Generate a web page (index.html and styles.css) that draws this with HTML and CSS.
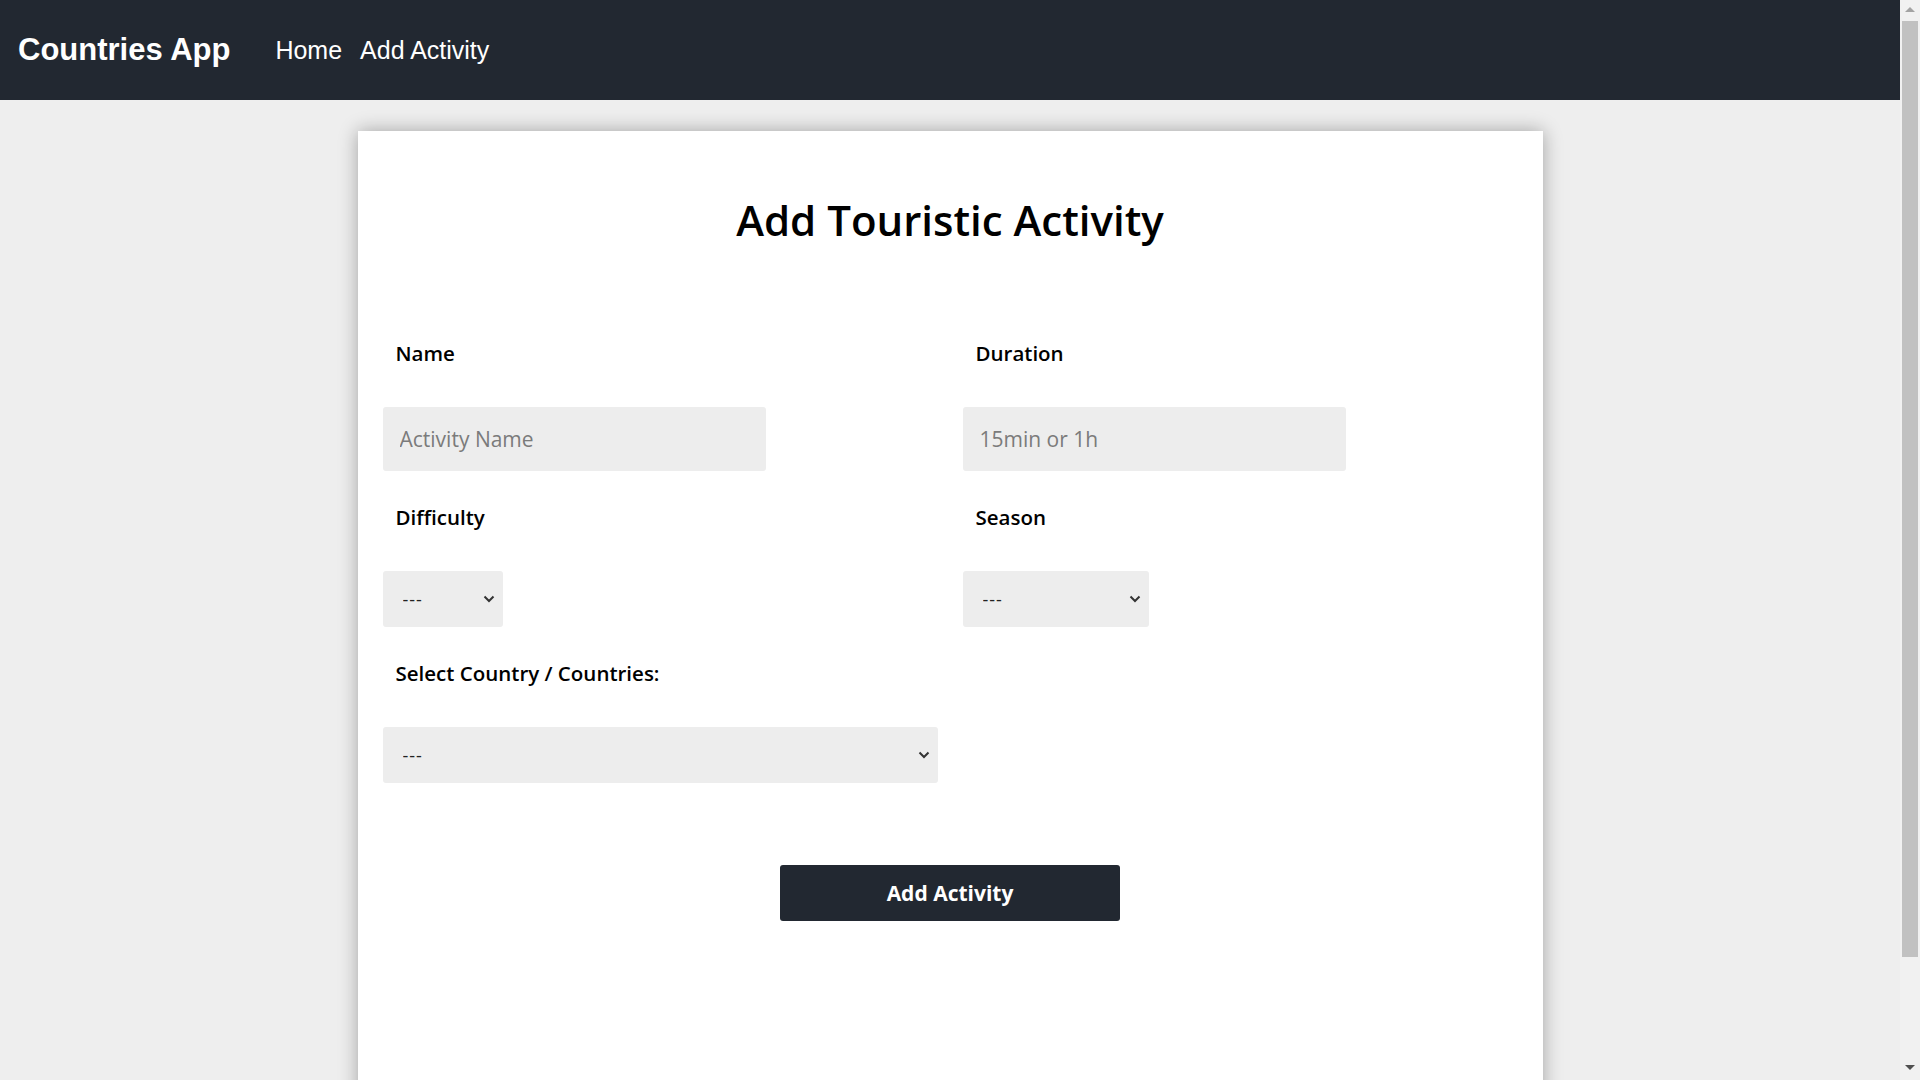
FILE: index.html
```html
<!DOCTYPE html>
<html lang="en">
<head>
<meta charset="utf-8">
<title>Countries App</title>
<link rel="stylesheet" href="styles.css">
</head>
<body>
<nav class="navbar">
  <span class="brand">Countries App</span>
  <div class="nav-links">
    <a href="#" class="nav-link">Home</a>
    <a href="#" class="nav-link">Add Activity</a>
  </div>
</nav>
<main class="page">
  <section class="card">
    <h1 class="title">Add Touristic Activity</h1>
    <form class="form">
      <div class="grid">
        <div class="field">
          <label class="label">Name</label>
          <input class="text-input" type="text" placeholder="Activity Name">
        </div>
        <div class="field">
          <label class="label">Duration</label>
          <input class="text-input" type="text" placeholder="15min or 1h">
        </div>
        <div class="field">
          <label class="label">Difficulty</label>
          <div class="select-wrap">
            <select class="select sel-diff">
              <option>---</option>
              <option>1</option>
              <option>2</option>
              <option>3</option>
              <option>4</option>
              <option>5</option>
            </select>
            <svg class="chevron" width="12" height="8" viewBox="0 0 12 8"><path d="M1.5 1.5 L6 6 L10.5 1.5" fill="none" stroke="#333" stroke-width="2"/></svg>
          </div>
        </div>
        <div class="field">
          <label class="label">Season</label>
          <div class="select-wrap">
            <select class="select sel-season">
              <option>---</option>
              <option>Summer</option>
              <option>Autumn</option>
              <option>Winter</option>
              <option>Spring</option>
            </select>
            <svg class="chevron" width="12" height="8" viewBox="0 0 12 8"><path d="M1.5 1.5 L6 6 L10.5 1.5" fill="none" stroke="#333" stroke-width="2"/></svg>
          </div>
        </div>
        <div class="field">
          <label class="label">Select Country / Countries:</label>
          <div class="select-wrap">
            <select class="select sel-country">
              <option>---</option>
              <option>Argentina</option>
            </select>
            <svg class="chevron" width="12" height="8" viewBox="0 0 12 8"><path d="M1.5 1.5 L6 6 L10.5 1.5" fill="none" stroke="#333" stroke-width="2"/></svg>
          </div>
        </div>
      </div>
      <div class="actions">
        <button type="button" class="submit">Add Activity</button>
      </div>
    </form>
  </section>
</main>
<div class="scrollbar">
  <span class="arrow-up"></span>
  <div class="thumb"></div>
  <span class="arrow-down"></span>
</div>
</body>
</html>
```
FILE: styles.css
```css
html {
  background: #eeeeee;
}
body {
  margin: 0;
  padding-right: 20px;
  background: #eeeeee;
  font-family: "Open Sans", "DejaVu Sans", sans-serif;
}

/* classic scrollbar look */
.scrollbar {
  position: fixed;
  top: 0;
  right: 0;
  width: 20px;
  height: 100vh;
  background: #f1f1f1;
  display: flex;
  flex-direction: column;
  align-items: center;
}
.arrow-up {
  margin-top: 7px;
  width: 0;
  height: 0;
  border-left: 5px solid transparent;
  border-right: 5px solid transparent;
  border-bottom: 5px solid #a3a3a3;
}
.thumb {
  margin-top: 9px;
  width: 16px;
  height: 936px;
  background: #c1c1c1;
}
.arrow-down {
  margin-top: auto;
  margin-bottom: 10px;
  width: 0;
  height: 0;
  border-left: 5px solid transparent;
  border-right: 5px solid transparent;
  border-top: 5px solid #505050;
}

.navbar {
  height: 100px;
  background: #222831;
  display: flex;
  align-items: center;
  padding-left: 18px;
}
.brand {
  font-family: "Liberation Sans", Arial, sans-serif;
  font-weight: 700;
  font-size: 31px;
  color: #ffffff;
  margin-right: 45px;
}
.nav-links {
  display: flex;
  gap: 18px;
}
.nav-link {
  font-family: "Liberation Sans", Arial, sans-serif;
  font-size: 25px;
  color: #ffffff;
  text-decoration: none;
}

.page {
  padding: 31px 0 30px;
}
.card {
  box-sizing: border-box;
  width: 1185px;
  margin: 0 auto;
  background: #ffffff;
  box-shadow: 0 0 18px rgba(0, 0, 0, 0.32);
  padding: 61px 0 263px;
}
.title {
  margin: 0 0 92px;
  text-align: center;
  font-weight: 600;
  font-size: 42px;
  line-height: 56px;
  color: #000000;
}
.grid {
  display: grid;
  grid-template-columns: 580px 580px;
  row-gap: 33px;
  padding-left: 25px;
}
.field {
  display: flex;
  flex-direction: column;
  align-items: flex-start;
}
.label {
  font-weight: 600;
  font-size: 20.5px;
  line-height: 27px;
  color: #000000;
  margin: 0 0 40px 13px;
}
.text-input {
  box-sizing: border-box;
  width: 383px;
  height: 64px;
  border: none;
  border-radius: 3px;
  background: #ededed;
  padding: 0 17px;
  font-family: "Open Sans", sans-serif;
  font-size: 21px;
  color: #222;
  outline: none;
}
.text-input::placeholder {
  color: #7b7b7b;
}
.select-wrap {
  position: relative;
  display: flex;
}
.select {
  box-sizing: border-box;
  height: 56px;
  border: none;
  border-radius: 3px;
  background-color: #ededed;
  padding: 0 24px 0 20px;
  font-family: "Open Sans", sans-serif;
  font-size: 18px;
  letter-spacing: 1px;
  color: #222;
  outline: none;
  -webkit-appearance: none;
  appearance: none;
}
.chevron {
  position: absolute;
  right: 8px;
  top: 24px;
  pointer-events: none;
}
.sel-diff {
  width: 120px;
}
.sel-season {
  width: 186px;
}
.sel-country {
  width: 555px;
}
.actions {
  display: flex;
  justify-content: center;
  margin-top: 82px;
}
.submit {
  width: 340px;
  height: 56px;
  border: none;
  border-radius: 3px;
  background: #222831;
  color: #ffffff;
  font-family: "Open Sans", sans-serif;
  font-weight: 700;
  font-size: 21px;
  cursor: pointer;
}
```
